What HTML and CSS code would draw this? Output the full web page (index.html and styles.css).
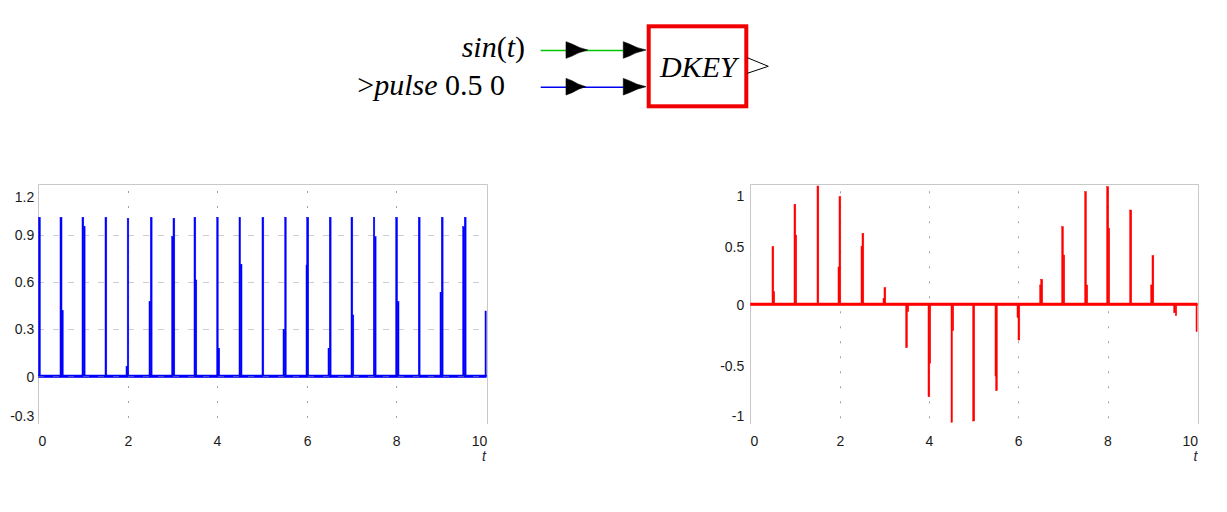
FILE: index.html
```html
<!DOCTYPE html>
<html>
<head>
<meta charset="utf-8">
<link rel="stylesheet" href="styles.css">
</head>
<body>
<div class="diagram">
  <svg class="scheme" width="440" height="175" viewBox="0 0 440 175">
    <line class="wire-green" x1="200.7" y1="50.5" x2="290" y2="50.5"/>
    <line class="wire-blue" x1="200.7" y1="87.2" x2="290" y2="87.2"/>
    <path class="arrow" d="M226,41.7 L232,44 Q239,48 247.7,50 Q239,52 232,56 L226,58.3 Z"/>
    <path class="arrow" d="M283.3,41.7 L289.3,44 Q296.3,48 306,50 Q296.3,52 289.3,56 L283.3,58.3 Z"/>
    <path class="arrow" d="M226,78.4 L232,80.7 Q238,84.7 245.7,86.7 Q238,88.7 232,92.7 L226,95 Z"/>
    <path class="arrow" d="M283.3,78.4 L289.3,80.7 Q296.3,84.7 306,86.7 Q296.3,88.7 289.3,92.7 L283.3,95 Z"/>
    <rect class="block" x="308.7" y="26.3" width="97.6" height="80"/>
    <text class="math" x="358.3" y="76.7" text-anchor="middle"><tspan class="it">DKEY</tspan></text>
    <polyline class="outport" points="407.3,57.7 428.3,66.3 407.3,73.3"/>
    <text class="math" x="185" y="57" text-anchor="end"><tspan class="it">sin</tspan>(<tspan class="it">t</tspan>)</text>
    <text class="math" x="165" y="95" text-anchor="end">&gt;<tspan class="it">pulse</tspan> 0.5 0</text>
  </svg>
</div>
<div class="charts">
  <svg class="chart" width="500" height="290" viewBox="0 0 500 290">
    <g class="grid">
      <line class="hgrid" x1="38.5" y1="60.5" x2="487" y2="60.5"/>
      <line class="hgrid" x1="38.5" y1="107.5" x2="487" y2="107.5"/>
      <line class="hgrid" x1="38.5" y1="154.5" x2="487" y2="154.5"/>
      <line class="vgrid" x1="128.5" y1="9" x2="128.5" y2="249"/>
      <line class="vgrid" x1="217.5" y1="9" x2="217.5" y2="249"/>
      <line class="vgrid" x1="307.5" y1="9" x2="307.5" y2="249"/>
      <line class="vgrid" x1="396.5" y1="9" x2="396.5" y2="249"/>
    </g>
    <polyline class="frame" points="38.5,249 38.5,9.5 487.5,9.5 487.5,249"/>
    <g class="bars-blue">
      <rect x="38.5" y="200" width="448" height="2.6"/>
      <rect x="38.5" y="42.3" width="1.8" height="158.7"/>
      <rect x="60" y="42.3" width="2" height="158.7"/>
      <rect x="62" y="135.7" width="1.2" height="65.3"/>
      <rect x="82" y="42.3" width="1.8" height="158.7"/>
      <rect x="83.8" y="51.7" width="1.3" height="149.3"/>
      <rect x="105" y="42.3" width="1.8" height="158.7"/>
      <rect x="126" y="191.7" width="1.7" height="9.3"/>
      <rect x="127.2" y="43.3" width="1.6" height="157.7"/>
      <rect x="149" y="126.7" width="1.4" height="74.3"/>
      <rect x="150.3" y="42.3" width="1.8" height="158.7"/>
      <rect x="171.7" y="61.7" width="1.4" height="139.3"/>
      <rect x="173" y="43.3" width="1.8" height="157.7"/>
      <rect x="194" y="42.3" width="1.8" height="158.7"/>
      <rect x="195.7" y="105" width="1.1" height="96"/>
      <rect x="216.7" y="42.3" width="1.5" height="158.7"/>
      <rect x="218" y="173.3" width="1.7" height="27.7"/>
      <rect x="239" y="42.3" width="1.5" height="158.7"/>
      <rect x="240.3" y="89.3" width="1.7" height="111.7"/>
      <rect x="262" y="42.3" width="1.8" height="158.7"/>
      <rect x="283" y="154.3" width="1.7" height="46.7"/>
      <rect x="284.7" y="42.3" width="1.5" height="158.7"/>
      <rect x="306" y="90" width="1.7" height="111"/>
      <rect x="306.7" y="42.3" width="2" height="158.7"/>
      <rect x="328" y="173.3" width="1.4" height="27.7"/>
      <rect x="329.3" y="42.3" width="1.8" height="158.7"/>
      <rect x="351" y="42.3" width="1.8" height="158.7"/>
      <rect x="352.7" y="140" width="1.1" height="61"/>
      <rect x="373.3" y="42.3" width="1.5" height="158.7"/>
      <rect x="374.7" y="61.7" width="1.4" height="139.3"/>
      <rect x="395.7" y="42.3" width="1.8" height="158.7"/>
      <rect x="397.3" y="126.7" width="1.7" height="74.3"/>
      <rect x="418.3" y="42.3" width="1.8" height="158.7"/>
      <rect x="440" y="117.3" width="1.4" height="83.7"/>
      <rect x="441.3" y="42.3" width="1.8" height="158.7"/>
      <rect x="462.7" y="51.7" width="1.7" height="149.3"/>
      <rect x="464.3" y="42.3" width="1.8" height="158.7"/>
      <rect x="485" y="136" width="1.2" height="65"/>
    </g>
    <line class="hgrid" x1="38.5" y1="201.5" x2="487" y2="201.5"/>
    <g class="ticks">
      <text x="34.3" y="26.7" text-anchor="end">1.2</text>
      <text x="34.3" y="65" text-anchor="end">0.9</text>
      <text x="34.3" y="111.7" text-anchor="end">0.6</text>
      <text x="34.3" y="159.3" text-anchor="end">0.3</text>
      <text x="34.3" y="206.7" text-anchor="end">0</text>
      <text x="34.3" y="246" text-anchor="end">-0.3</text>
      <text x="38.6" y="270.7">0</text>
      <text x="128.5" y="270.7" text-anchor="middle">2</text>
      <text x="217.5" y="270.7" text-anchor="middle">4</text>
      <text x="307.7" y="270.7" text-anchor="middle">6</text>
      <text x="396.7" y="270.7" text-anchor="middle">8</text>
      <text x="487.3" y="270.7" text-anchor="end">10</text>
      <text class="axis-name" x="486" y="286" text-anchor="end">t</text>
    </g>
  </svg>
  <svg class="chart" width="527" height="290" viewBox="0 0 527 290">
    <g class="grid">
      <line class="vgrid" x1="140.5" y1="9.3" x2="140.5" y2="249"/>
      <line class="vgrid" x1="229.5" y1="9.3" x2="229.5" y2="249"/>
      <line class="vgrid" x1="318.5" y1="9.3" x2="318.5" y2="249"/>
      <line class="vgrid" x1="408.5" y1="9.3" x2="408.5" y2="249"/>
    </g>
    <polyline class="frame" points="50.5,249 50.5,9.5 498.5,9.5 498.5,249"/>
    <g class="bars-red">
      <rect x="50.5" y="128" width="446.8" height="2.6"/>
      <rect x="72" y="71.7" width="1.8" height="57.6"/>
      <rect x="73.7" y="116.7" width="1" height="12.6"/>
      <rect x="94" y="29.3" width="1.8" height="100"/>
      <rect x="95.7" y="60" width="1" height="69.3"/>
      <rect x="117" y="11" width="1.8" height="118.3"/>
      <rect x="138" y="92" width="1.3" height="37.3"/>
      <rect x="139" y="21.7" width="1.8" height="107.6"/>
      <rect x="161" y="71.7" width="1.3" height="57.6"/>
      <rect x="162" y="58.3" width="1.8" height="71"/>
      <rect x="183" y="123.3" width="1.3" height="6"/>
      <rect x="184" y="112.7" width="1.8" height="16.6"/>
      <rect x="205.7" y="129.3" width="1.7" height="43.4"/>
      <rect x="207.3" y="129.3" width="1.4" height="7.4"/>
      <rect x="228" y="129.3" width="1.8" height="92.4"/>
      <rect x="229.7" y="129.3" width="1" height="59"/>
      <rect x="251" y="129.3" width="1.4" height="118"/>
      <rect x="252.3" y="129.3" width="1.4" height="26.4"/>
      <rect x="272.7" y="129.3" width="2" height="116.7"/>
      <rect x="295" y="129.3" width="1.3" height="71.7"/>
      <rect x="295.7" y="129.3" width="1.6" height="86.4"/>
      <rect x="317" y="129.3" width="1.3" height="13.4"/>
      <rect x="318" y="129.3" width="1.8" height="35.7"/>
      <rect x="339.7" y="110" width="1.3" height="19.3"/>
      <rect x="340.7" y="104.3" width="2" height="25"/>
      <rect x="361.7" y="51.7" width="1.7" height="77.6"/>
      <rect x="363.3" y="80" width="1.4" height="49.3"/>
      <rect x="384.7" y="16.7" width="1.7" height="112.6"/>
      <rect x="386.3" y="110" width="1.4" height="19.3"/>
      <rect x="406.7" y="11.7" width="2" height="117.6"/>
      <rect x="408.7" y="53.3" width="1" height="76"/>
      <rect x="429.7" y="35" width="2" height="94.3"/>
      <rect x="450.7" y="110" width="1.3" height="19.3"/>
      <rect x="452" y="80.7" width="1.8" height="48.6"/>
      <rect x="473.7" y="129.3" width="1.7" height="8.4"/>
      <rect x="475.3" y="129.3" width="1.4" height="11.4"/>
      <rect x="496" y="129.3" width="1.1" height="27.4"/>
    </g>
    <g class="ticks">
      <text x="44.3" y="25.7" text-anchor="end">1</text>
      <text x="44.3" y="76.7" text-anchor="end">0.5</text>
      <text x="44.3" y="135" text-anchor="end">0</text>
      <text x="44.3" y="196" text-anchor="end">-0.5</text>
      <text x="44.3" y="245.7" text-anchor="end">-1</text>
      <text x="50.4" y="270.7">0</text>
      <text x="140.3" y="270.7" text-anchor="middle">2</text>
      <text x="229.4" y="270.7" text-anchor="middle">4</text>
      <text x="318.7" y="270.7" text-anchor="middle">6</text>
      <text x="408" y="270.7" text-anchor="middle">8</text>
      <text x="498" y="270.7" text-anchor="end">10</text>
      <text class="axis-name" x="497.3" y="286" text-anchor="end">t</text>
    </g>
  </svg>
</div>
</body>
</html>
```
FILE: styles.css
```css
html, body {
  margin: 0;
  padding: 0;
  background: #ffffff;
}
body {
  width: 1227px;
  height: 512px;
  overflow: hidden;
}
.diagram {
  height: 175px;
  padding-left: 340px;
}
.diagram svg,
.charts svg {
  display: block;
}
.charts {
  display: flex;
  gap: 200px;
}
.math {
  font-family: "Liberation Serif", "Times New Roman", serif;
  font-size: 30px;
  fill: #000;
}
.it {
  font-style: italic;
}
.wire-green {
  stroke: #00c800;
  stroke-width: 1.5;
}
.wire-blue {
  stroke: #0000f0;
  stroke-width: 1.5;
}
.arrow {
  fill: #000;
  stroke: #000;
  stroke-width: 0.6;
}
.block {
  fill: #fff;
  stroke: #f00000;
  stroke-width: 4;
}
.outport {
  fill: none;
  stroke: #000;
  stroke-width: 1;
}
.frame {
  fill: none;
  stroke: #c8c8c8;
  stroke-width: 1;
}
.hgrid {
  stroke: #9a9a9a;
  stroke-width: 1;
  stroke-dasharray: 1 1 1 1 1 10;
}
.vgrid {
  stroke: #a0a0a0;
  stroke-width: 1;
  stroke-dasharray: 2 13;
  stroke-dashoffset: -7;
}
.bars-blue rect {
  fill: #0000ff;
  stroke: #0000ff;
  stroke-width: 0.5;
}
.bars-red rect {
  fill: #ff0000;
  stroke: #ff0000;
  stroke-width: 0.5;
}
.ticks text {
  font-family: "Liberation Sans", Arial, sans-serif;
  font-size: 14px;
  fill: #1a1a1a;
}
.ticks .axis-name {
  font-style: italic;
  fill: #2a2a3a;
}
```
